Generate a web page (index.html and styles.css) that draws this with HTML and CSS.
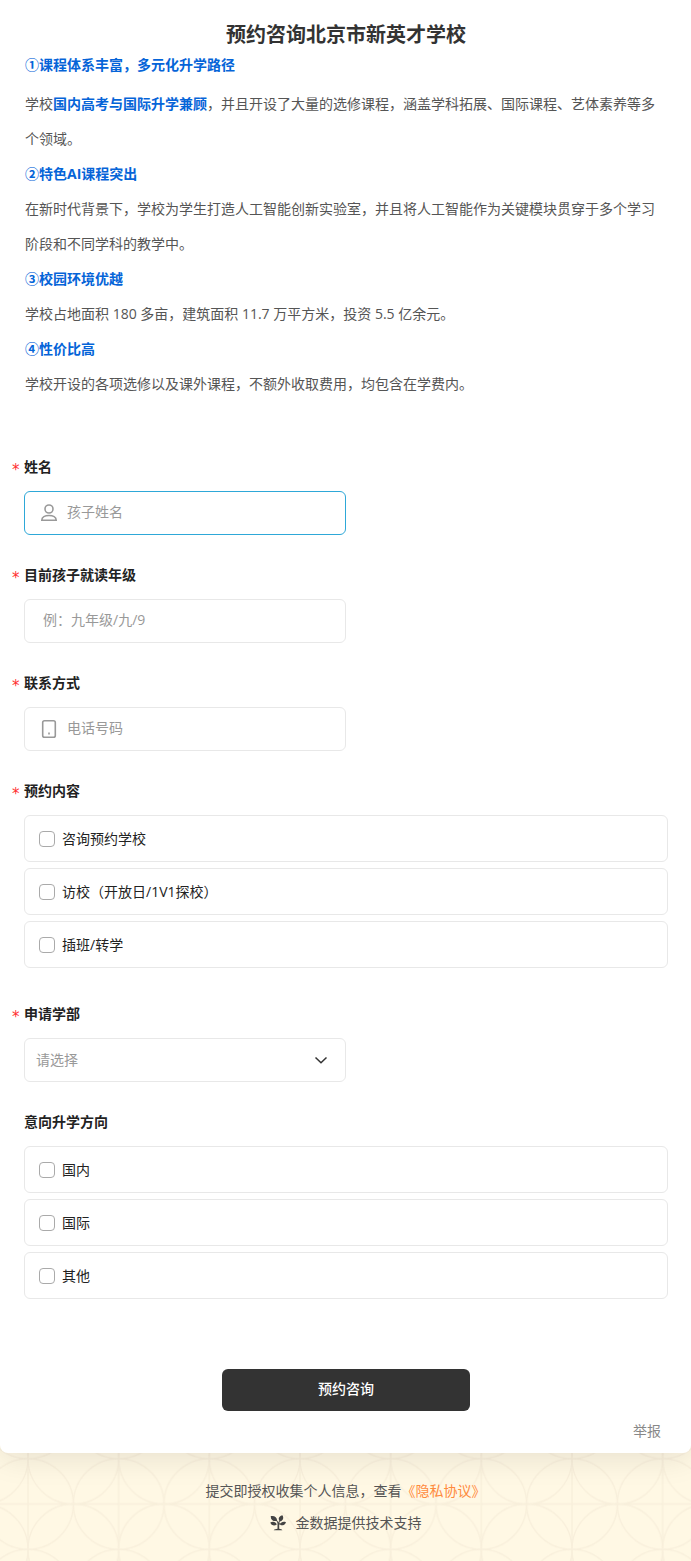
FILE: index.html
```html
<!DOCTYPE html>
<html lang="zh-CN">
<head>
<meta charset="utf-8">
<meta name="viewport" content="width=device-width, initial-scale=1">
<title>预约咨询北京市新英才学校</title>
<link rel="stylesheet" href="styles.css">
</head>
<body>
<main class="card">
  <h1 class="title">预约咨询北京市新英才学校</h1>
  <section class="intro">
    <p class="lead"><strong>①课程体系丰富，多元化升学路径</strong></p>
    <p>学校<strong>国内高考与国际升学兼顾</strong>，并且开设了大量的选修课程，涵盖学科拓展、国际课程、艺体素养等多个领域。</p>
    <p><strong>②特色AI课程突出</strong></p>
    <p>在新时代背景下，学校为学生打造人工智能创新实验室，并且将人工智能作为关键模块贯穿于多个学习阶段和不同学科的教学中。</p>
    <p><strong>③校园环境优越</strong></p>
    <p>学校占地面积 180 多亩，建筑面积 11.7 万平方米，投资 5.5 亿余元。</p>
    <p><strong>④性价比高</strong></p>
    <p>学校开设的各项选修以及课外课程，不额外收取费用，均包含在学费内。</p>
  </section>

  <form class="form">
    <div class="field">
      <label class="label" for="name"><span class="required">*</span>姓名</label>
      <div class="control control-active">
        <svg class="icon" viewBox="0 0 18 18" aria-hidden="true"><circle cx="9" cy="5" r="4"/><path d="M1.800 16.200c0-3 3.200-4.700 7.200-4.700s7.200 1.700 7.200 4.700z"/></svg>
        <input class="input" id="name" type="text" placeholder="孩子姓名">
      </div>
    </div>
    <div class="field">
      <label class="label" for="grade"><span class="required">*</span>目前孩子就读年级</label>
      <div class="control">
        <input class="input" id="grade" type="text" placeholder="例：九年级/九/9">
      </div>
    </div>
    <div class="field">
      <label class="label" for="phone"><span class="required">*</span>联系方式</label>
      <div class="control">
        <svg class="icon" viewBox="0 0 18 18" aria-hidden="true"><rect x="2.700" y=".8" width="12.600" height="16.400" rx="1.800"/><path d="M9 12.500v2"/></svg>
        <input class="input" id="phone" type="tel" placeholder="电话号码">
      </div>
    </div>
    <fieldset class="field">
      <legend class="label"><span class="required">*</span>预约内容</legend>
      <label class="option"><input class="check" type="checkbox">咨询预约学校</label>
      <label class="option"><input class="check" type="checkbox">访校（开放日/1V1探校）</label>
      <label class="option"><input class="check" type="checkbox">插班/转学</label>
    </fieldset>
    <div class="field">
      <label class="label" for="division"><span class="required">*</span>申请学部</label>
      <div class="control control-select">
        <select class="select" id="division"><option>请选择</option></select>
        <svg class="chevron" viewBox="0 0 14 14" aria-hidden="true"><path d="M1.500 4.500 7 9.800l5.500-5.300"/></svg>
      </div>
    </div>
    <fieldset class="field">
      <legend class="label">意向升学方向</legend>
      <label class="option"><input class="check" type="checkbox">国内</label>
      <label class="option"><input class="check" type="checkbox">国际</label>
      <label class="option"><input class="check" type="checkbox">其他</label>
    </fieldset>
    <button class="submit" type="submit">预约咨询</button>
    <a class="report" href="#">举报</a>
  </form>
</main>
<footer class="footer">
  <p>提交即授权收集个人信息，查看<a class="policy" href="#">《隐私协议》</a></p>
  <p class="support">
    <svg class="logo" viewBox="0 0 16 16" aria-hidden="true"><path d="M.8 1.100C4.400.3 7.400 2.200 7 5.900 3.400 6.600.5 4.900.8 1.100zM12.400.2c1.700 2.600.8 5.400-2.500 6.300C7.500 3.900 8.900 1.200 12.400.2zM.3 7.400c2.700-1.400 5.600-.7 6.500 2C4.300 11.200 1.200 10.500.3 7.400zM16 7.200c-.9 2.900-3.500 3.900-6 2.500.8-2.600 3.200-3.700 6-2.500z"/><path d="M6 5l1.500 3v5.800c-1.600.1-2.900.6-3.800 1.400h8.700c-.8-.8-1.800-1.300-3.200-1.400V9.800l1.700-1-.5-.9-1.200.7L10 5.700l-1-.2-.5 2L6.500 4.600z"/></svg>
    <span>金数据提供技术支持</span>
  </p>
</footer>
</body>
</html>
```
FILE: styles.css
```css
* {
  box-sizing: border-box;
}

body {
  margin: 0;
  color: #555;
  font: 14px/20px "Open Sans", "Noto Sans CJK SC", sans-serif;
  background: #fff8e4 url("data:image/svg+xml,%3Csvg xmlns='http://www.w3.org/2000/svg' width='272' height='272' viewBox='0 0 6 6'%3E%3Cdefs%3E%3Cpattern id='p' width='2' height='2' patternUnits='userSpaceOnUse'%3E%3Cg fill='none' stroke='%23f8efdb' stroke-width='.03'%3E%3Ccircle cx='0' cy='1' r='1'/%3E%3Ccircle cx='2' cy='1' r='1'/%3E%3Ccircle cx='1' cy='0' r='1'/%3E%3Ccircle cx='1' cy='2' r='1'/%3E%3Cpath d='M0 0v2M2 0v2M0 1h2'/%3E%3C/g%3E%3C/pattern%3E%3C/defs%3E%3Crect width='6' height='6' fill='url(%23p)'/%3E%3C/svg%3E") 28px 8px;
}

p {
  margin: 0;
}

.card {
  padding: 20px 23px 12px 24px;
  background: #fff;
  border-radius: 0 0 8px 8px;
  box-shadow: 0 4px 32px rgba(0, 0, 0, 0.1);
}

.title {
  margin: 0;
  color: #333;
  font-size: 20px;
  line-height: 30px;
  text-align: center;
}

.intro {
  padding: 0 1px;
  line-height: 35px;
}

.intro .lead {
  margin-bottom: 6px;
  line-height: 30px;
}

.intro strong {
  color: #0564d8;
}

.form {
  display: flex;
  flex-direction: column;
  margin-top: 56px;
}

.field {
  min-width: 0;
  margin: 0 0 30px;
  padding: 0;
  border: 0;
}

.label {
  display: block;
  margin-bottom: 14px;
  padding: 0;
  color: #222;
  font-weight: 700;
}

.required {
  display: inline-block;
  width: 12px;
  margin-left: -12px;
  color: #ff3030;
  font-family: "DejaVu Sans", sans-serif;
  font-size: 15px;
  font-weight: 400;
  line-height: 0;
  vertical-align: -3px;
}

.control {
  display: flex;
  align-items: center;
  gap: 6px;
  width: 50%;
  height: 44px;
  padding: 0 15px;
  border: 1px solid #e8e8e8;
  border-radius: 6px;
}

.control-active {
  border-color: #2ea8d8;
}

.icon {
  flex: none;
  width: 18px;
  height: 18px;
  fill: none;
  stroke: #999;
  stroke-width: 1.600;
}

.input {
  flex: 1;
  min-width: 0;
  padding: 0 3px 2px;
  border: 0;
  outline: 0;
  color: #222;
  font: inherit;
  background: none;
}

.input::placeholder {
  color: #999;
  opacity: 1;
}

.control-select {
  position: relative;
  padding: 0;
}

.select {
  width: 100%;
  height: 100%;
  padding: 0 11px;
  border: 0;
  color: #999;
  font: inherit;
  background: none;
  appearance: none;
}

.chevron {
  position: absolute;
  top: 14px;
  right: 17px;
  width: 14px;
  height: 14px;
  fill: none;
  stroke: #333;
  stroke-width: 1.500;
  pointer-events: none;
}

.option {
  display: flex;
  align-items: center;
  gap: 7px;
  height: 47px;
  margin-bottom: 6px;
  padding: 0 14px;
  border: 1px solid #e8e8e8;
  border-radius: 6px;
  color: #222;
}

.check {
  flex: none;
  width: 16px;
  height: 16px;
  margin: 0;
  border: 1px solid #aaa;
  border-radius: 4px;
  background: #fff;
  appearance: none;
}

.check:checked {
  background: #333;
}

.submit {
  align-self: center;
  width: 248px;
  height: 42px;
  margin-top: 34px;
  padding: 0 0 2px;
  border: 0;
  border-radius: 6px;
  color: #fff;
  font: inherit;
  font-weight: 500;
  background: #333;
}

.report {
  align-self: flex-end;
  margin: 10px 7px 0 0;
  color: #888;
  text-decoration: none;
}

.footer {
  display: flex;
  flex-direction: column;
  align-items: center;
  gap: 12px;
  padding: 28px 24px;
}

.policy {
  color: #ff8a3c;
  text-decoration: none;
}

.support {
  display: flex;
  align-items: center;
  gap: 10px;
}

.logo {
  width: 16px;
  height: 16px;
  fill: #444;
}
```
